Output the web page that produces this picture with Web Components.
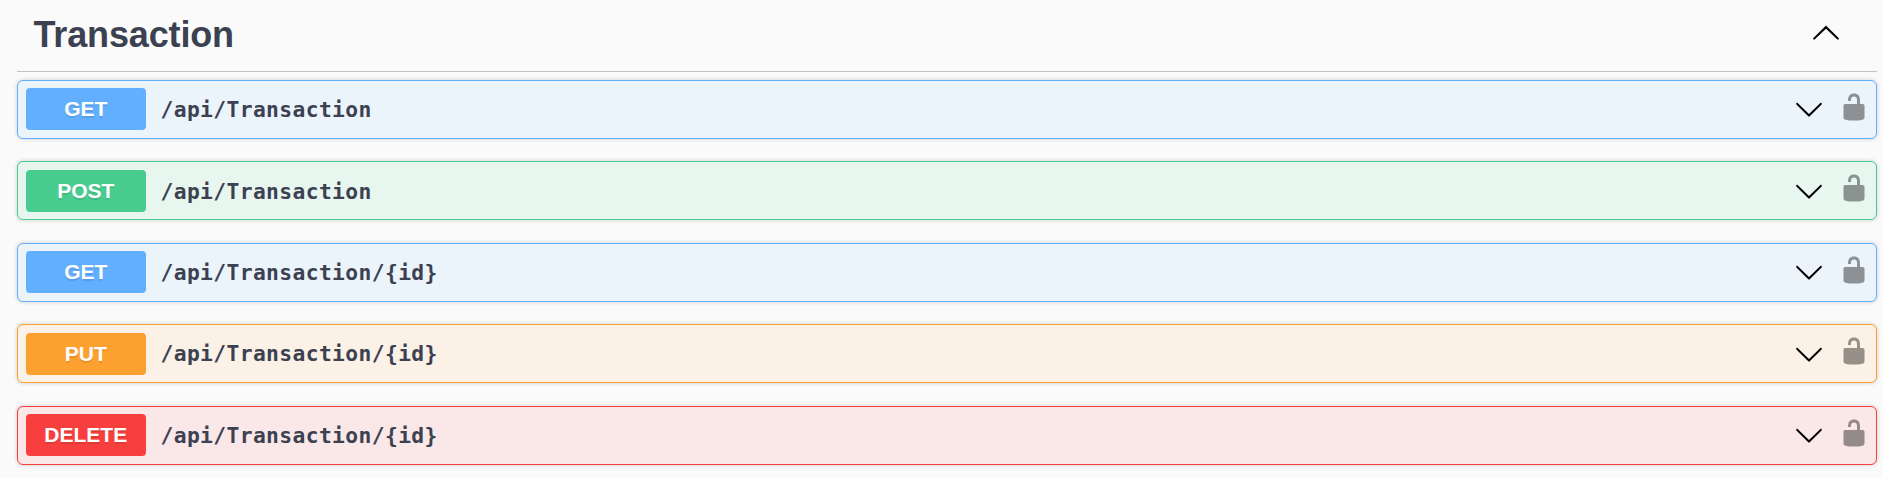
<!DOCTYPE html>
<html lang="en">
<head>
<meta charset="utf-8">
<title>API operations</title>
<style>
  html, body { margin: 0; background: #fafafa; }
  body { height: 478px; overflow: hidden; font-family: "Liberation Sans", Arial, sans-serif; color: #3b4151; }
</style>
</head>
<body>
<api-tag-section name="Transaction">
  <api-operation method="get" path="/api/Transaction"></api-operation>
  <api-operation method="post" path="/api/Transaction"></api-operation>
  <api-operation method="get" path="/api/Transaction/{id}"></api-operation>
  <api-operation method="put" path="/api/Transaction/{id}"></api-operation>
  <api-operation method="delete" path="/api/Transaction/{id}"></api-operation>
</api-tag-section>
<script>
const ICONS = {
  up: 'M17.418 14.908C17.69 15.176 18.127 15.176 18.397 14.908C18.667 14.64 18.668 14.207 18.397 13.939L10.489 6.109C10.219 5.841 9.782 5.841 9.51 6.109L1.602 13.939C1.332 14.207 1.332 14.64 1.602 14.908C1.873 15.176 2.311 15.176 2.581 14.908L10 7.767L17.418 14.908Z',
  down: 'M17.418 6.109C17.69 5.841 18.127 5.841 18.397 6.109C18.667 6.377 18.668 6.81 18.397 7.078L10.489 14.908C10.219 15.176 9.782 15.176 9.51 14.908L1.602 7.078C1.332 6.81 1.332 6.377 1.602 6.109C1.873 5.841 2.311 5.841 2.581 6.109L10 13.25L17.418 6.109Z',
  unlocked: 'M15.8 8H14V5.6C14 2.703 12.665 1 10 1 7.334 1 6 2.703 6 5.6V6h2v-.801C8 3.754 8.797 3 10 3c1.203 0 2 .754 2 2.199V8H4c-.553 0-1 .646-1 1.199V17c0 .549.428 1.139.951 1.307l1.197.387C5.672 18.861 6.55 19 7.1 19h5.8c.549 0 1.428-.139 1.951-.307l1.196-.387c.524-.167.953-.757.953-1.306V9.199C17 8.646 16.352 8 15.8 8z'
};

customElements.define('api-icon', class extends HTMLElement {
  connectedCallback() {
    if (this.shadowRoot) return;
    this.attachShadow({ mode: 'open' }).innerHTML = `
      <style>:host { display: block; width: 30px; height: 30px; flex: none; } svg { display: block; fill: #000; }</style>
      <svg width="30" height="30" viewBox="0 0 20 20" aria-hidden="true"><path d="${ICONS[this.getAttribute('name')]}"/></svg>`;
  }
});

customElements.define('method-badge', class extends HTMLElement {
  connectedCallback() {
    if (this.shadowRoot) return;
    this.attachShadow({ mode: 'open' }).innerHTML = `
      <style>
        :host { display: block; flex: none; box-sizing: border-box; width: 120px; height: 42px; border-radius: 4px;
          margin-bottom: .4px; padding-right: .5px;
          background: var(--accent); color: #fff; text-align: center; font-weight: 700; font-size: 21px; line-height: 42px;
          text-shadow: 0 1.5px 0 rgba(0,0,0,.1); }
      </style><slot></slot>`;
  }
});

customElements.define('api-operation', class extends HTMLElement {
  connectedCallback() {
    if (this.shadowRoot) return;
    this.attachShadow({ mode: 'open' }).innerHTML = `
      <style>
        :host { display: flex; align-items: center; box-sizing: border-box; height: 59px; padding: 0 7px 0 8px;
          border: 1px solid var(--accent); border-radius: 6px; background: var(--tint);
          box-shadow: 0 0 4.5px rgba(0,0,0,.19); }
        :host([method=get]) { --accent: #61affe; --tint: #ebf3fb; }
        :host([method=post]) { --accent: #49cc90; --tint: #e8f6f0; }
        :host([method=put]) { --accent: #fca130; --tint: #fbf1e6; }
        :host([method=delete]) { --accent: #f93e3e; --tint: #fae7e7; }
        .path { flex: 1; margin-left: 14.5px; padding-top: 1.2px; font: 700 21.3px/28px "DejaVu Sans Mono", monospace; letter-spacing: .38px; }
        .chevron { margin-bottom: .4px; }
        .lock { opacity: .4; margin: 0 0 5px 15px; }
      </style>
      <method-badge>${this.getAttribute('method').toUpperCase()}</method-badge>
      <span class="path">${this.getAttribute('path')}</span>
      <api-icon class="chevron" name="down"></api-icon>
      <api-icon class="lock" name="unlocked"></api-icon>`;
  }
});

customElements.define('api-tag-section', class extends HTMLElement {
  connectedCallback() {
    if (this.shadowRoot) return;
    this.attachShadow({ mode: 'open' }).innerHTML = `
      <style>
        :host { display: block; padding: 0 6px 0 17px; }
        header { display: flex; align-items: center; box-sizing: border-box; height: 72px; padding: 0 36px 4px 16.5px;
          border-bottom: 1px solid #c1c3c6; }
        h3 { flex: 1; margin: 2px 0 0; font-size: 36px; line-height: 42px; font-weight: 700; letter-spacing: -.15px; }
        header api-icon { margin-bottom: 3px; }
        .list { display: flex; flex-direction: column; gap: 22.45px; padding-top: 8px; }
      </style>
      <header><h3>${this.getAttribute('name')}</h3><api-icon name="up"></api-icon></header>
      <div class="list"><slot></slot></div>`;
  }
});
</script>
</body>
</html>
